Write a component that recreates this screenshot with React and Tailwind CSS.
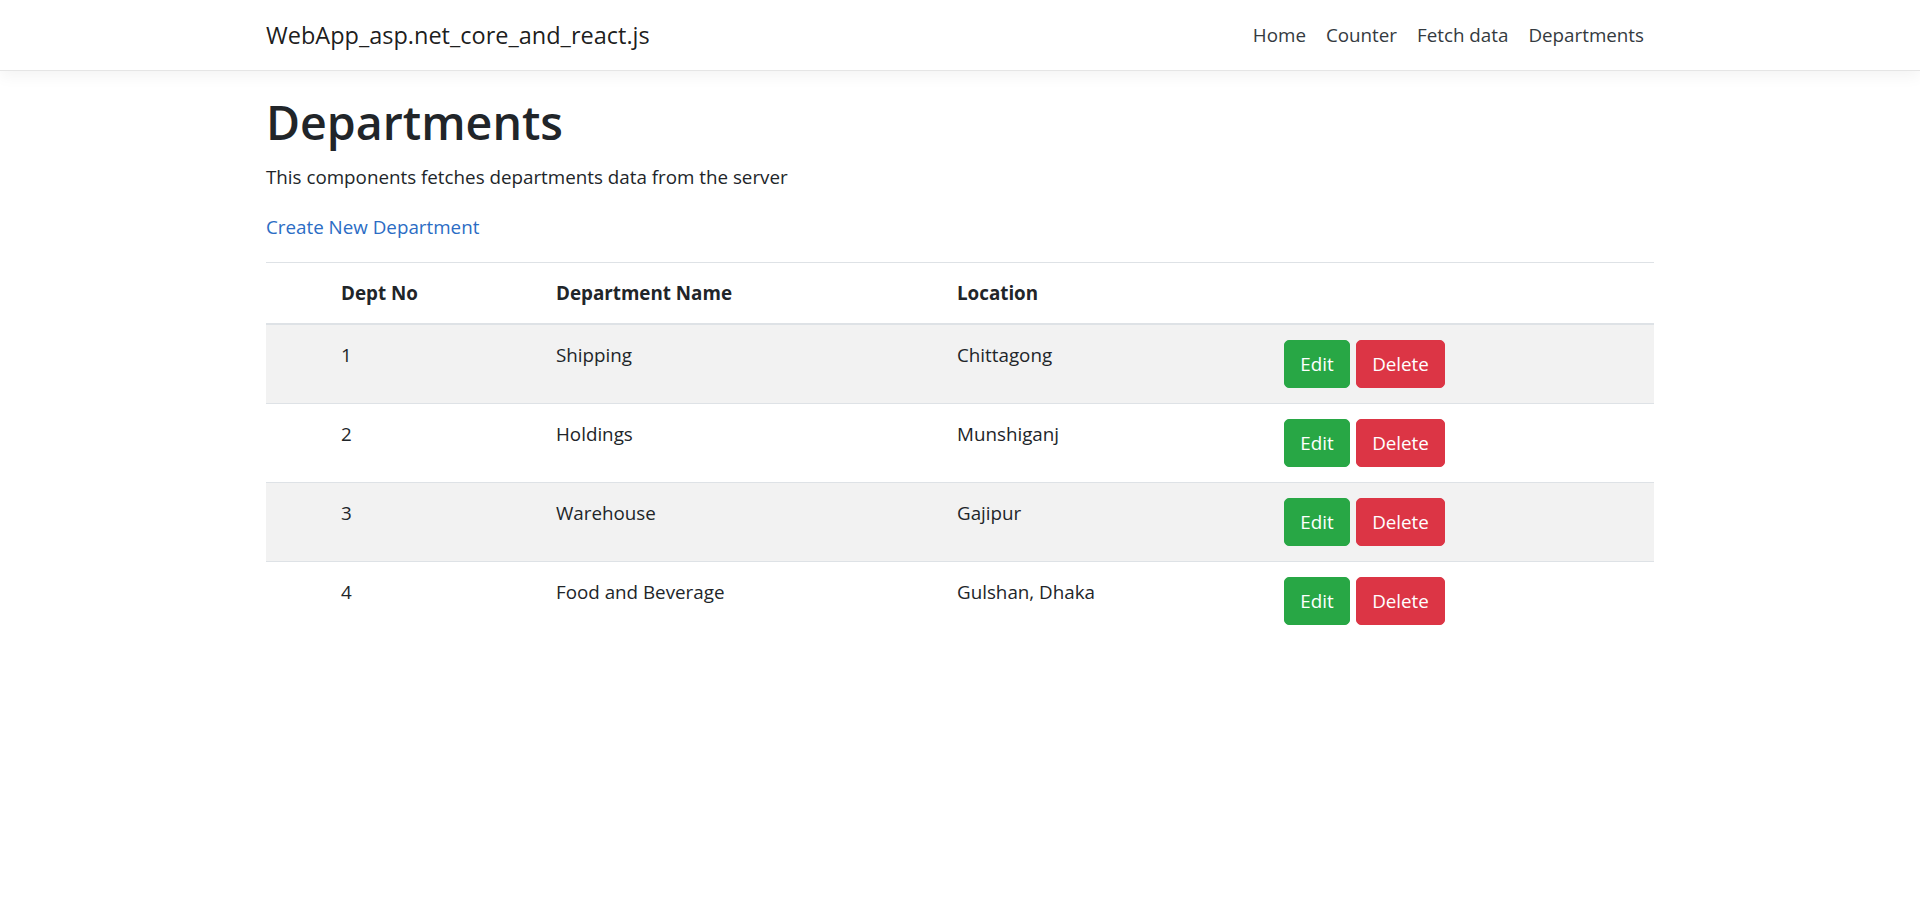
import React from "react";

const departments = [
  { id: 1, name: "Shipping", location: "Chittagong" },
  { id: 2, name: "Holdings", location: "Munshiganj" },
  { id: 3, name: "Warehouse", location: "Gajipur" },
  { id: 4, name: "Food and Beverage", location: "Gulshan, Dhaka" },
];

const cols = "grid grid-cols-[60px_215px_401px_327px_1fr]";

const NavMenu = () => {
  return (
    <header className="bg-white border-b border-[#e5e5e5] shadow-[0_5px_15px_rgba(0,0,0,0.05)]">
      <nav className="mx-auto w-[1388px] h-[70px] flex items-center justify-between">
        <a className="text-[23.5px] leading-[37px] text-black/90">WebApp_asp.net_core_and_react.js</a>
        <ul className="flex items-center">
          {["Home", "Counter", "Fetch data", "Departments"].map((item) => (
            <li key={item}>
              <a className="block px-[10px] py-[10px] text-[18.8px] leading-[30px] text-[#343a40]">{item}</a>
            </li>
          ))}
        </ul>
      </nav>
    </header>
  );
};

const Departments = () => {
  return (
    <div className="mx-auto w-[1388px] pt-[21px] text-[#212529]">
      <h1 className="text-[46.5px] leading-[60px] font-semibold mb-[10px]">Departments</h1>
      <p className="text-[18.8px] leading-[30px] mb-[20px]">This components fetches departments data from the server</p>
      <p className="text-[18.8px] leading-[30px] mb-[20px]">
        <a className="text-[#2b6cc4]">Create New Department</a>
      </p>
      <div className="text-[18.8px] leading-[30px]">
        {/* header */}
        <div className={`${cols} border-t border-b-2 border-[#dee2e6] font-bold`}>
          <div className="p-[15px]"></div>
          <div className="p-[15px]">Dept No</div>
          <div className="p-[15px]">Department Name</div>
          <div className="p-[15px]">Location</div>
          <div className="p-[15px]"></div>
        </div>
        {departments.map((dept, i) => (
          <div
            key={dept.id}
            className={`${cols} ${i > 0 ? "border-t border-[#dee2e6]" : ""} ${i % 2 === 0 ? "bg-[#f2f2f2]" : "bg-white"}`}
          >
            <div className="p-[15px]"></div>
            <div className="p-[15px]">{dept.id}</div>
            <div className="p-[15px]">{dept.name}</div>
            <div className="p-[15px]">{dept.location}</div>
            <div className="p-[15px] flex gap-[6px]">
              <button className="h-[48px] w-[66px] rounded-[5px] bg-[#28a745] border border-[#28a745] text-white">Edit</button>
              <button className="h-[48px] w-[89px] rounded-[5px] bg-[#dc3545] border border-[#dc3545] text-white">Delete</button>
            </div>
          </div>
        ))}
      </div>
    </div>
  );
};

export default function App() {
  return (
    <div className="min-h-screen bg-white font-['Open_Sans',sans-serif]">
      <NavMenu />
      <Departments />
    </div>
  );
}
